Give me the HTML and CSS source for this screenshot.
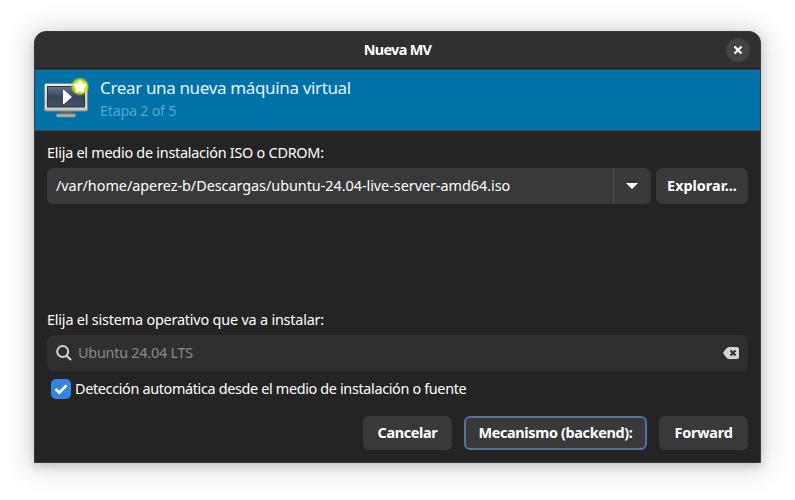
FILE: index.html
```html
<!DOCTYPE html>
<html lang="es">
<head>
<meta charset="utf-8">
<title>Nueva MV</title>
<link rel="stylesheet" href="styles.css">
</head>
<body>
<main class="window">
  <header class="titlebar">
    <h1 class="title">Nueva MV</h1>
    <button class="close" aria-label="Cerrar"><svg width="10" height="10" viewBox="0 0 10 10"><path d="M1.5 1.5 8.5 8.5M8.5 1.5 1.5 8.5" stroke="#fff" stroke-width="2.3"/></svg></button>
  </header>
  <section class="banner">
    <svg class="monitor" width="46" height="42" viewBox="0 0 46 42">
      <defs>
        <linearGradient id="frame" x1="0" y1="0" x2="0" y2="1"><stop offset="0" stop-color="#e8e8e6"/><stop offset=".75" stop-color="#c9c9c7"/><stop offset=".85" stop-color="#dededc"/><stop offset="1" stop-color="#b8b8b5"/></linearGradient>
        <linearGradient id="screen" x1="0" y1="0" x2="0" y2="1"><stop offset="0" stop-color="#66758a"/><stop offset=".5" stop-color="#39475b"/><stop offset="1" stop-color="#435065"/></linearGradient>
        <radialGradient id="glow"><stop offset=".5" stop-color="#edf04a"/><stop offset=".75" stop-color="#cfe01e" stop-opacity=".85"/><stop offset="1" stop-color="#a5cf20" stop-opacity="0"/></radialGradient>
      </defs>
      <path d="M17 34h10v2l2 1H15l2-1z" fill="#636562"/>
      <rect x="12.500" y="37" width="19" height="3" rx="1" fill="#b5b5b2" stroke="#858782"/>
      <rect x=".5" y="6.500" width="43" height="27.500" rx="1.500" fill="url(#frame)" stroke="#8b8d89"/>
      <rect x="3.500" y="9.500" width="37" height="20.500" fill="url(#screen)" stroke="#273347"/>
      <path d="M19 13v14h1l8-7-8-7z" fill="#fff"/>
      <circle cx="36" cy="9.500" r="9.500" fill="url(#glow)"/>
      <path d="m36 4 1.600 3.500 3.900.5-2.900 2.700.7 3.800-3.300-1.800-3.300 1.800.7-3.800-2.900-2.700 3.900-.5z" fill="#fff" stroke="#fff" stroke-width="1.500" stroke-linejoin="round"/>
    </svg>
    <div class="heading"><h2 class="name">Crear una nueva máquina virtual</h2><p class="step">Etapa 2 of 5</p></div>
  </section>
  <section class="content">
    <label class="label media-label">Elija el medio de instalación ISO o CDROM:</label>
    <div class="media-row">
      <div class="combo"><span class="path">/var/home/aperez-b/Descargas/ubuntu-24.04-live-server-amd64.iso</span><button class="arrow" aria-label="Abrir"><svg width="12" height="6" viewBox="0 0 12 6"><path d="M0 0h12L6 6z" fill="#fff"/></svg></button></div>
      <button class="button browse">Explorar...</button>
    </div>
    <label class="label os-label">Elija el sistema operativo que va a instalar:</label>
    <div class="search">
      <svg width="16" height="16" viewBox="0 0 16 16"><circle cx="6.700" cy="6.500" r="5.500" fill="none" stroke="#d3d3d3" stroke-width="2"/><path d="m10.500 10.500 4.500 4.500" stroke="#d3d3d3" stroke-width="2.200"/></svg>
      <span class="system">Ubuntu 24.04 LTS</span>
      <svg class="clear" width="16" height="12" viewBox="0 0 16 12"><path d="M5.500 0H14a2 2 0 0 1 2 2v8a2 2 0 0 1-2 2H5.500Q3.500 11.500 0 6 3.500.5 5.500 0z" fill="#d3d3d3"/><path d="m7.500 3.500 5 5m0-5-5 5" stroke="#2f2f2f" stroke-width="2"/></svg>
    </div>
    <div class="detect"><span class="check"><svg width="14" height="12" viewBox="0 0 14 12"><path d="m1.500 6 3.700 3.700 7.300-7.400" fill="none" stroke="#fff" stroke-width="2.600"/></svg></span><span class="detect-text">Detección automática desde el medio de instalación o fuente</span></div>
    <footer class="actions"><button class="button cancel">Cancelar</button><button class="button backend">Mecanismo (backend):</button><button class="button forward">Forward</button></footer>
  </section>
</main>
</body>
</html>
```
FILE: styles.css
```css
* { box-sizing: border-box; }
body { margin: 0; height: 500px; overflow: hidden; background: #fff; font: 14.4px/20px "Noto Sans", sans-serif; color: #fff; }
h1, h2, p { margin: 0; }
button { border: 0; padding: 0; color: #fff; font: inherit; }
svg { display: block; flex: none; }
span, label, h1, h2, p { white-space: nowrap; }
.window { width: 727px; height: 432px; margin: 31px 0 0 34px; border: 1px solid #3a3a3a; border-radius: 12px 12px 0 0; background: #242424; box-shadow: 0 3px 9px 1px rgba(0,0,0,.13), 0 2px 28px 4px rgba(0,0,0,.16); overflow: hidden; }
.window { display: flex; flex-direction: column; }
.titlebar { height: 37px; display: grid; grid-template-columns: 1fr auto 1fr; align-items: center; background: #303030; border-bottom: 1px solid #202020; padding-right: 10px; }
.title { grid-column: 2; font-size: 14.4px; font-weight: 700; letter-spacing: -.65px; padding-left: 10px; }
.close { justify-self: end; width: 24px; height: 24px; border-radius: 50%; background: #444; display: grid; place-items: center; }
.banner { height: 62px; border-top: 1px solid #3b4146; border-bottom: 1px solid #454545; background: #0072a8; display: flex; padding: 7px 0 0 9px; }
.heading { margin-left: 10px; }
.name { font-size: 17px; line-height: 24px; font-weight: 400; letter-spacing: -.35px; margin-top: -1px; color: #e9f3f8; }
.step { color: #53a9d9; letter-spacing: -.28px; margin-top: 1px; }
.content { flex: 1; padding: 12px; display: flex; flex-direction: column; }
.label { display: block; height: 20px; letter-spacing: -.25px; }
.media-row { display: flex; gap: 5px; margin-top: 5px; height: 36px; }
.combo { display: flex; align-items: center; width: 604px; background: #393939; border-radius: 6px; padding-left: 9px; }
.path { flex: 1; letter-spacing: -.035px; }
.arrow { width: 38px; height: 36px; border-left: 1px solid #545454; background: none; display: grid; place-items: center; padding-right: 2px; }
.button { background: #393939; border-radius: 6px; font-weight: 700; white-space: nowrap; letter-spacing: -.33px; }
.browse { width: 92px; letter-spacing: 0; }
.os-label { margin-top: 106px; letter-spacing: -.19px; }
.search { margin-top: 5px; height: 36px; background: #2f2f2f; border-radius: 6px; display: flex; align-items: center; padding: 0 9px; }
.system { margin-left: 6px; color: #8b8b8b; letter-spacing: -.24px; }
.clear { margin-left: auto; }
.detect { display: flex; align-items: center; height: 20px; margin: 8px 0 0 4px; }
.detect-text { letter-spacing: -.34px; }
.check { width: 20px; height: 20px; border-radius: 5px; background: #3584e4; display: grid; place-items: center; margin-right: 4px; }
.actions { display: flex; gap: 12px; justify-content: flex-end; margin-top: 17px; height: 34px; }
.cancel, .forward { width: 89px; }
.forward { letter-spacing: -.2px; }
.backend { width: 183px; border: 2px solid #557399; }
```
